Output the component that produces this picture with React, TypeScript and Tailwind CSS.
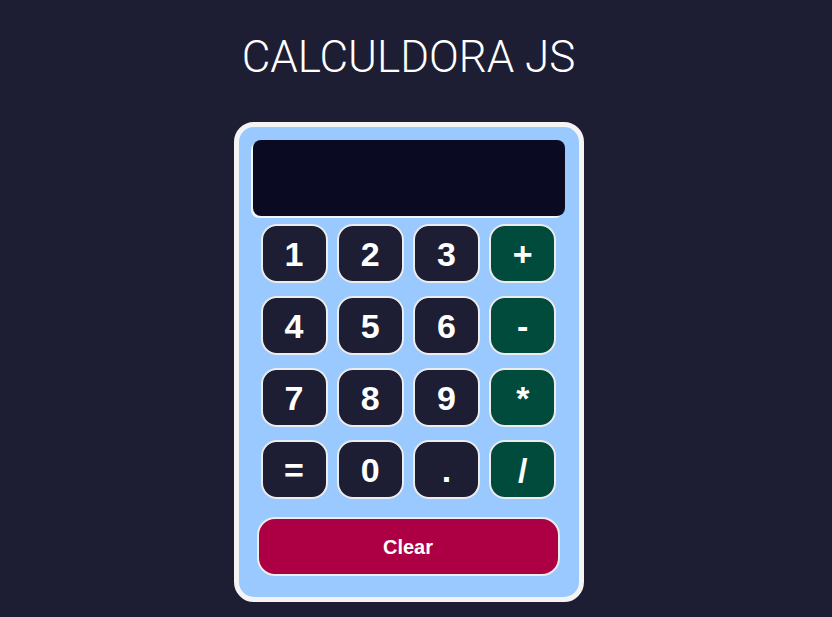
import { useState } from "react";

const rows = [
  ["1", "2", "3", "+"],
  ["4", "5", "6", "-"],
  ["7", "8", "9", "*"],
  ["=", "0", ".", "/"],
];

const ops = ["+", "-", "*", "/"];

export default function App() {
  const [display, setDisplay] = useState("");

  const press = (key: string) => {
    if (key === "=") {
      try {
        // simple eval of the expression typed so far
        const result = Function(`"use strict"; return (${display})`)();
        setDisplay(String(result));
      } catch {
        setDisplay("Error");
      }
      return;
    }
    setDisplay((d) => d + key);
  };

  return (
    <div className="min-h-screen w-full bg-[#1d1d33] font-['Liberation_Sans',Arial,sans-serif]">
      <div className="w-[817px] flex flex-col items-center pt-[35px] pb-[15px]">
        <h1 className="font-['Roboto',sans-serif] font-light text-[44px] leading-none text-white">
          CALCULDORA JS
        </h1>

        <div className="mt-[43px] w-[350px] rounded-[20px] border-[5px] border-[#f4f4f4] bg-[#99c9ff] pt-[13px] pb-[21px]">
          <div className="mx-[14px] h-[76px] rounded-[8px] bg-[#0a0a23] shadow-[-2px_2px_0_#f4f4f4] text-white text-[32px] font-bold flex items-center justify-end px-4 overflow-hidden">
            {display}
          </div>

          <div className="mt-[8px] px-[22px] grid grid-cols-4 gap-x-[9px] gap-y-[13px]">
            {rows.flat().map((key) => (
              <button
                key={key}
                onClick={() => press(key)}
                className={`h-[59px] w-[67px] rounded-[16px] border-2 border-[#ececec] text-white text-[34px] font-bold leading-none flex items-center justify-center ${
                  ops.includes(key) ? "bg-[#004b3b]" : "bg-[#1d1d33]"
                }`}
              >
                {key}
              </button>
            ))}
          </div>

          <div className="mt-[18px] px-[18px]">
            <button
              onClick={() => setDisplay("")}
              className="h-[59px] w-[303px] rounded-[18px] border-2 border-[#ececec] bg-[#ad0044] text-white text-[20px] font-bold"
            >
              Clear
            </button>
          </div>
        </div>
      </div>
    </div>
  );
}
